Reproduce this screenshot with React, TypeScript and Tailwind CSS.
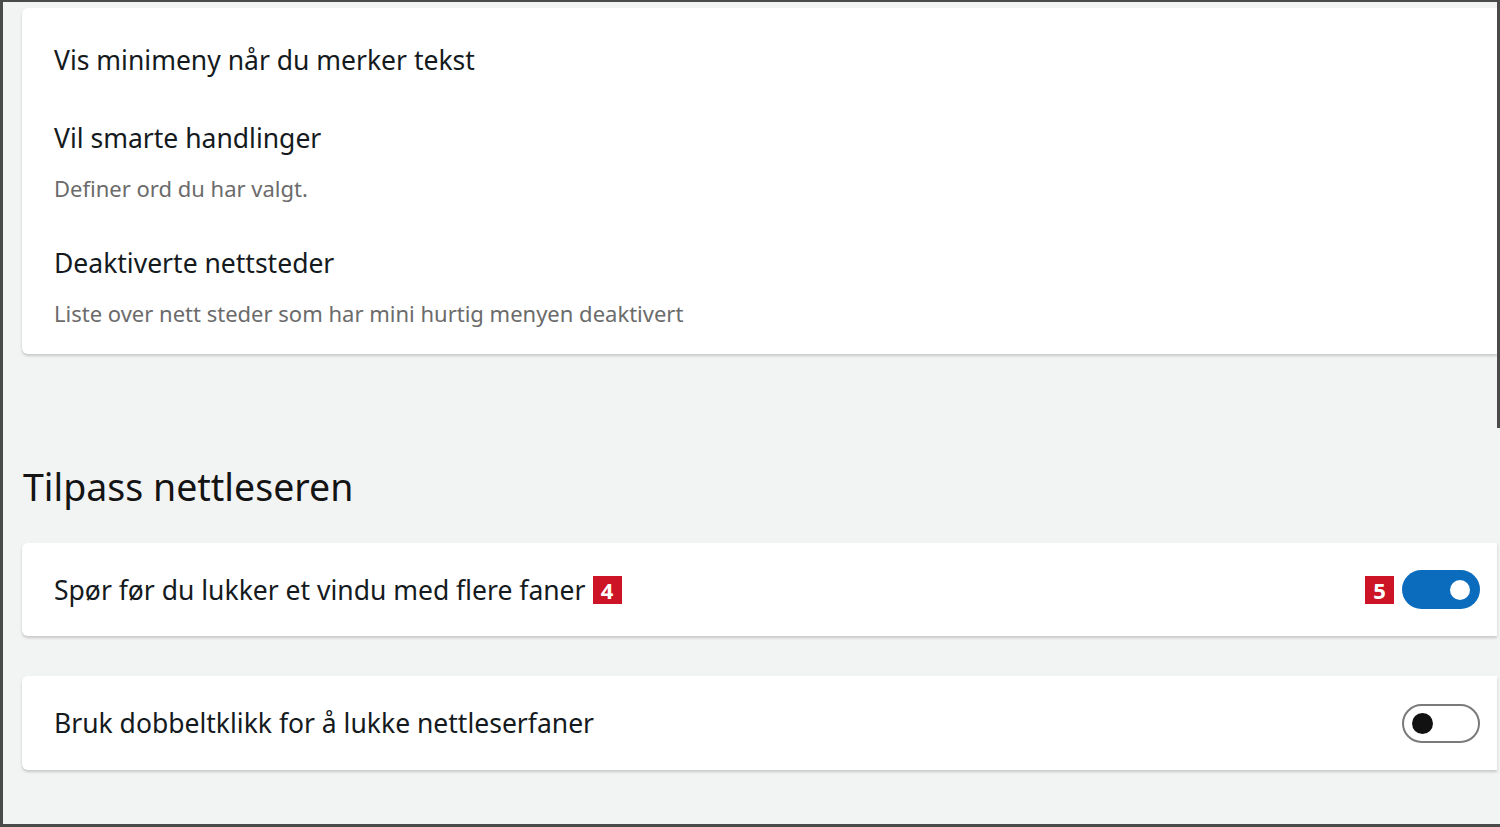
import React from "react";

const font = { fontFamily: '"Noto Sans", "Open Sans", sans-serif' };

function Badge({ n }: { n: string }) {
  return (
    <span className="inline-flex items-center justify-center w-[29px] h-[28px] bg-[#cc1426] text-white font-bold text-[22px] leading-none">
      {n}
    </span>
  );
}

export default function App() {
  return (
    <div
      className="w-[1500px] h-[827px] bg-[#f2f3f3] border-l-[3px] border-t-[2px] border-b-[3px] border-[#4a4a4a] flex overflow-hidden"
      style={font}
    >
      <div className="flex-1 flex flex-col pl-[19px] pt-[6px] min-w-0">
        {/* Card 1 */}
        <div className="bg-white rounded-l-[6px] shadow-[0_2px_3px_rgba(0,0,0,0.18)] pl-[32px] pt-[34px] pb-[26px] text-[#141a1d]">
          <div className="text-[26.5px] leading-[36px]">Vis minimeny når du merker tekst</div>
          <div className="mt-[42px] text-[26.5px] leading-[36px]">Vil smarte handlinger</div>
          <div className="mt-[17px] text-[22px] leading-[30px] text-[#6b6b6b]">Definer ord du har valgt.</div>
          <div className="mt-[42px] text-[26.5px] leading-[36px]">Deaktiverte nettsteder</div>
          <div className="mt-[17px] text-[22px] leading-[30px] text-[#6b6b6b]">Liste over nett steder som har mini hurtig menyen deaktivert</div>
        </div>

        {/* Heading */}
        <div className="mt-[109px] text-[37.5px] leading-[48px] text-[#141414] pl-[1px]">Tilpass nettleseren</div>

        {/* Card 2 */}
        <div className="mt-[32px] h-[93px] bg-white rounded-l-[6px] shadow-[0_2px_3px_rgba(0,0,0,0.18)] pl-[32px] pr-[17px] flex items-center text-[#141a1d]">
          <div className="flex items-center gap-[7px] flex-1">
            <span className="text-[26.5px] leading-[36px]">Spør før du lukker et vindu med flere faner</span>
            <Badge n="4" />
          </div>
          <div className="flex items-center gap-[8px]">
            <Badge n="5" />
            <div className="w-[78px] h-[39px] rounded-full bg-[#0b6cbd] flex items-center justify-end pr-[10px]">
              <div className="w-[20px] h-[20px] rounded-full bg-white" />
            </div>
          </div>
        </div>

        {/* Card 3 */}
        <div className="mt-[40px] h-[94px] bg-white rounded-l-[6px] shadow-[0_2px_3px_rgba(0,0,0,0.18)] pl-[32px] pr-[17px] flex items-center text-[#141a1d]">
          <div className="flex-1 text-[26.5px] leading-[36px]">Bruk dobbeltklikk for å lukke nettleserfaner</div>
          <div className="w-[78px] h-[39px] rounded-full border-[2px] border-[#7a7a7a] bg-white flex items-center pl-[8px]">
            <div className="w-[21px] h-[21px] rounded-full bg-[#111]" />
          </div>
        </div>
      </div>
      {/* right edge line */}
      <div className="w-[3px] flex flex-col">
        <div className="h-[426px] bg-[#4a4a4a]" />
      </div>
    </div>
  );
}
